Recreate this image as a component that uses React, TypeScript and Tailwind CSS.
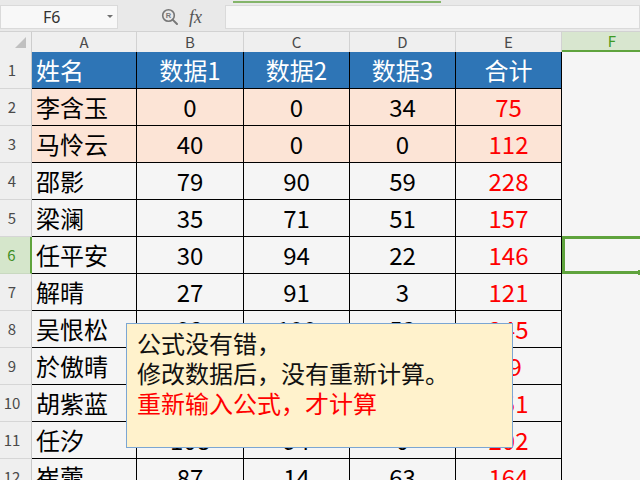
import React from "react";

type Row = { name: string; b: string; c: string; d: string; e: string; pink?: boolean };

const rows: Row[] = [
  { name: "李含玉", b: "0", c: "0", d: "34", e: "75", pink: true },
  { name: "马怜云", b: "40", c: "0", d: "0", e: "112", pink: true },
  { name: "邵影", b: "79", c: "90", d: "59", e: "228" },
  { name: "梁澜", b: "35", c: "71", d: "51", e: "157" },
  { name: "任平安", b: "30", c: "94", d: "22", e: "146" },
  { name: "解晴", b: "27", c: "91", d: "3", e: "121" },
  { name: "吴恨松", b: "92", c: "100", d: "53", e: "245" },
  { name: "於傲晴", b: "30", c: "21", d: "38", e: "89" },
  { name: "胡紫蓝", b: "50", c: "48", d: "53", e: "151" },
  { name: "任汐", b: "108", c: "94", d: "0", e: "202" },
  { name: "崔蕾", b: "87", c: "14", d: "63", e: "164" },
];

const cols = ["A", "B", "C", "D", "E"];
const widths = ["w-[105px]", "w-[107px]", "w-[106px]", "w-[106px]", "w-[106px]"];

function RowHeader({ n, active }: { n: number; active?: boolean }) {
  return (
    <div
      className={
        "w-[32px] shrink-0 h-full flex items-center justify-center pr-[7px] text-[15px] border-b " +
        (active
          ? "bg-[#d5e6cb] text-[#3f8f25] border-r-2 border-r-[#5fa33d] border-b-[#c9d9c0]"
          : "bg-[#efefef] text-[#4a4a4a] border-r border-r-[#c8c8c8] border-b-[#d6d6d6]")
      }
    >
      {n}
    </div>
  );
}

export default function App() {
  return (
    <div className="w-[640px] h-[480px] overflow-hidden relative bg-[#f5f5f5] font-['Noto_Sans_CJK_SC','Noto_Sans',sans-serif] text-black">
      {/* top bar + formula bar */}
      <div className="h-[32px] bg-[#e9e9e9] border-b border-[#d2d2d2] flex flex-col">
        <div className="h-[5px] flex items-start pt-px">
          <div className="ml-[233px] w-[208px] h-[2px] bg-[#84b56a]" />
        </div>
        <div className="h-[24px] flex">
          <div className="w-[118px] h-full bg-[#f8f8f8] border border-[#dadada] flex items-center">
            <span className="pl-[42px] text-[16px] text-[#333] font-['Noto_Sans',sans-serif] leading-none">F6</span>
            <svg className="ml-auto mr-[4px]" width="6" height="4" viewBox="0 0 6 4">
              <path d="M0 0 L6 0 L3 3 Z" fill="#707070" />
            </svg>
          </div>
          <div className="w-[107px] h-full flex items-center">
            <svg className="ml-[43px]" width="18" height="18" viewBox="0 0 18 18">
              <circle cx="7.5" cy="7.5" r="5.8" fill="none" stroke="#777" strokeWidth="1.6" />
              <path d="M11.6 11.6 L16 16" stroke="#777" strokeWidth="2" strokeLinecap="round" />
              <text x="7.5" y="10.3" textAnchor="middle" fontSize="7.5" fontFamily="Liberation Sans, sans-serif" fill="#777" fontWeight="bold">R</text>
            </svg>
            <span className="ml-[10px] text-[18px] italic text-[#555] font-['Liberation_Serif',serif] leading-none">fx</span>
          </div>
          <div className="flex-1 h-full bg-[#f6f6f6] border border-[#dadada]" />
        </div>
      </div>

      {/* column headers */}
      <div className="h-[20px] flex bg-[#efefef]">
        <div className="w-[32px] shrink-0 h-full border-r border-[#cdcdcd] flex items-end justify-end pr-[5px] pb-[4px]">
          <svg width="11" height="11" viewBox="0 0 11 11">
            <path d="M11 0 L11 11 L0 11 Z" fill="#c0c0c0" />
          </svg>
        </div>
        {cols.map((c, i) => (
          <div
            key={c}
            className={widths[i] + " shrink-0 h-full border-r border-[#d2d2d2] flex items-center justify-center text-[15px] text-[#4a4a4a]"}
          >
            {c}
          </div>
        ))}
        <div className="w-[100px] shrink-0 h-full bg-[#d8e6cf] border-b-2 border-[#5fa33d] flex items-center justify-center text-[15px] text-[#3f9a24]">
          F
        </div>
      </div>

      {/* header row 1 */}
      <div className="h-[37px] flex">
        <RowHeader n={1} />
        <div className="flex bg-[#2e75b6] text-white text-[24px] border-b border-black">
          <div className="w-[105px] h-full border-r border-black flex items-center pl-[4px]">姓名</div>
          <div className="w-[107px] h-full border-r border-black flex items-center justify-center">数据1</div>
          <div className="w-[106px] h-full border-r border-black flex items-center justify-center">数据2</div>
          <div className="w-[106px] h-full border-r border-black flex items-center justify-center">数据3</div>
          <div className="w-[106px] h-full border-r border-black flex items-center justify-center">合计</div>
        </div>
      </div>

      {/* data rows */}
      {rows.map((r, idx) => {
        const n = idx + 2;
        const active = n === 6;
        const bg = r.pink ? "bg-[#fce4d6]" : "bg-[#f5f5f5]";
        return (
          <div key={n} className="h-[37px] flex">
            <RowHeader n={n} active={active} />
            <div className={"flex text-[24px] border-b border-black " + bg}>
              <div className="w-[105px] h-full border-r border-black flex items-center pl-[4px]">{r.name}</div>
              <div className="w-[107px] h-full border-r border-black flex items-center justify-center">{r.b}</div>
              <div className="w-[106px] h-full border-r border-black flex items-center justify-center">{r.c}</div>
              <div className="w-[106px] h-full border-r border-black flex items-center justify-center">{r.d}</div>
              <div className="w-[106px] h-full border-r border-black flex items-center justify-center text-[#ff0000]">{r.e}</div>
            </div>
            {active ? (
              <div className="relative w-[100px] h-[38px] -mt-px shrink-0 border-[3px] border-r-0 border-[#5fa33d]">
                <div className="absolute left-[73px] bottom-[-4px] w-[5px] h-[5px] bg-[#5fa33d]" />
              </div>
            ) : null}
          </div>
        );
      })}

      {/* comment box */}
      <div className="absolute left-[126px] top-[323px] w-[387px] h-[125px] bg-[#fff2cc] border border-[#7ba6d3] pl-[10px] pt-[4px] text-[24px] leading-[30px]">
        <div className="text-[#111]">公式没有错，</div>
        <div className="text-[#111]">修改数据后，没有重新计算。</div>
        <div className="text-[#ff0000]">重新输入公式，才计算</div>
      </div>
    </div>
  );
}
